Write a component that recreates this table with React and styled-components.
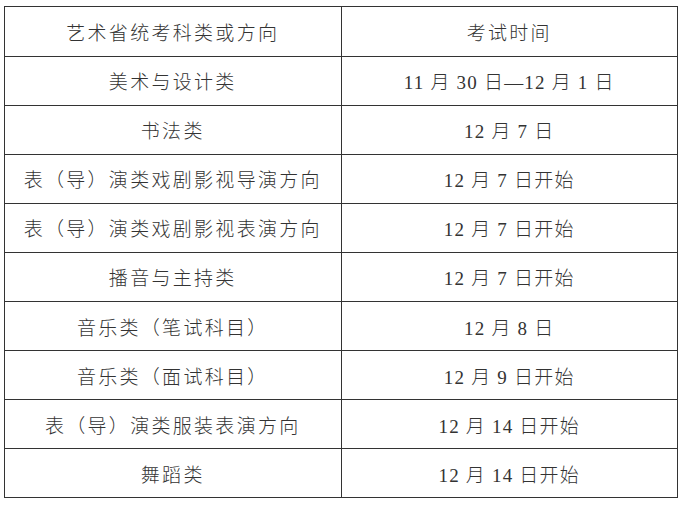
import styled, { createGlobalStyle } from "styled-components";

const rows = [
  ["美术与设计类", "11 月 30 日—12 月 1 日"],
  ["书法类", "12 月 7 日"],
  ["表（导）演类戏剧影视导演方向", "12 月 7 日开始"],
  ["表（导）演类戏剧影视表演方向", "12 月 7 日开始"],
  ["播音与主持类", "12 月 7 日开始"],
  ["音乐类（笔试科目）", "12 月 8 日"],
  ["音乐类（面试科目）", "12 月 9 日开始"],
  ["表（导）演类服装表演方向", "12 月 14 日开始"],
  ["舞蹈类", "12 月 14 日开始"],
];

function App() {
  return (
    <>
      <GlobalStyle />
      <Page>
        <Table>
          <thead>
            <tr>
              <Head>艺术省统考科类或方向</Head>
              <Head>考试时间</Head>
            </tr>
          </thead>
          <tbody>
            {rows.map(([subject, date]) => (
              <tr key={subject + date}>
                <Cell>{subject}</Cell>
                <Cell $date>{date}</Cell>
              </tr>
            ))}
          </tbody>
        </Table>
      </Page>
    </>
  );
}

const GlobalStyle = createGlobalStyle`
  body {
    margin: 0;
    background: #fff;
  }
`;

const Page = styled.div`
  padding: 6px 0 0 4px;
`;

const Table = styled.table`
  width: 674px;
  border-collapse: collapse;
  table-layout: fixed;
  font-family: "Liberation Serif", "Noto Sans CJK SC", serif;
  font-weight: 300;
  color: #333;
`;

const Head = styled.th`
  height: 48.5px;
  padding: 0;
  border: 1.5px solid #333;
  font-weight: 300;
  font-size: 19px;
  letter-spacing: 2.3px;
  text-align: center;
  vertical-align: middle;
`;

const Cell = styled.td`
  height: 48.1px;
  padding: 0;
  border: 1.5px solid #333;
  font-size: 19px;
  letter-spacing: ${(p) => (p.$date ? "1.2px" : "2.3px")};
  text-align: center;
  vertical-align: middle;
`;

export default App;
